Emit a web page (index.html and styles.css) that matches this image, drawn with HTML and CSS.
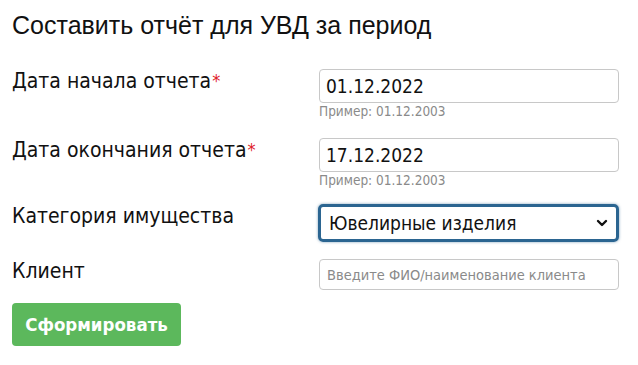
FILE: index.html
```html
<!DOCTYPE html>
<html lang="ru">
<head>
<meta charset="utf-8">
<title>Отчёт для УВД</title>
<link rel="stylesheet" href="styles.css">
</head>
<body>
<div class="page">
  <h1 class="title">Составить отчёт для УВД за период</h1>
  <form class="form">
    <div class="row row-1">
      <label class="label">Дата начала отчета<span class="req">*</span></label>
      <div class="field">
        <input class="input" type="text" value="01.12.2022">
        <div class="hint">Пример: 01.12.2003</div>
      </div>
    </div>
    <div class="row row-2">
      <label class="label">Дата окончания отчета<span class="req">*</span></label>
      <div class="field">
        <input class="input" type="text" value="17.12.2022">
        <div class="hint">Пример: 01.12.2003</div>
      </div>
    </div>
    <div class="row row-3">
      <label class="label">Категория имущества</label>
      <div class="field">
        <div class="select">
          <span class="select-value">Ювелирные изделия</span>
          <svg class="chevron" width="12" height="8" viewBox="0 0 12 8"><path d="M2 2 L6 6 L10 2" fill="none" stroke="#111" stroke-width="2.4" stroke-linecap="round" stroke-linejoin="round"/></svg>
        </div>
      </div>
    </div>
    <div class="row row-4">
      <label class="label">Клиент</label>
      <div class="field">
        <input class="input input-sm" type="text" placeholder="Введите ФИО/наименование клиента">
      </div>
    </div>
    <button class="btn" type="button">Сформировать</button>
  </form>
</div>
</body>
</html>
```
FILE: styles.css
```css
* { box-sizing: border-box; }
html, body { margin: 0; padding: 0; background: #fff; }
.page {
  padding: 10px 20px 0 12px;
  font-family: "DejaVu Sans Condensed", "DejaVu Sans", sans-serif;
  color: #111;
}
.title {
  margin: 0 0 29px 0;
  font-family: "Liberation Sans", Arial, sans-serif;
  font-weight: normal;
  font-size: 25px;
  line-height: 30px;
  color: #111;
}
.row {
  display: grid;
  grid-template-columns: 307px 300px;
  align-items: start;
}
.row-1 { margin-bottom: 19px; }
.row-2 { margin-bottom: 16px; }
.row-3 { margin-bottom: 17px; }
.row-4 { margin-bottom: 13px; }
.label {
  font-size: 21px;
  line-height: 24px;
  padding-top: 0;
}
.req { color: #e0202a; font-size: 18px; vertical-align: top; margin-left: 1px; }
.field { display: flex; flex-direction: column; }
.input {
  height: 34px;
  width: 300px;
  border: 1px solid #c8c8c8;
  border-radius: 4px;
  padding: 0 6px;
  font-family: "DejaVu Sans Condensed", "DejaVu Sans", sans-serif;
  font-size: 19px;
  color: #111;
  outline: none;
}
.input-sm { height: 31px; font-size: 14.5px; padding: 0 7px; }
.input-sm::placeholder { color: #8a8a8a; }
.hint {
  margin-top: 1px;
  font-size: 13.5px;
  line-height: 15px;
  color: #8a8a8a;
}
.select {
  height: 38px;
  width: 301px;
  margin-left: -1px;
  border: 3px solid #2b6591;
  border-radius: 5px;
  box-shadow: 0 0 3px rgba(43,101,145,0.6);
  display: flex;
  align-items: center;
  justify-content: space-between;
  padding: 0 8px 0 8px;
  font-size: 19px;
}
.chevron { display: block; }
.btn {
  display: block;
  height: 43px;
  width: 169px;
  border: none;
  border-radius: 4px;
  background: #5cb85c;
  color: #fff;
  font-family: "DejaVu Sans Condensed", "DejaVu Sans", sans-serif;
  font-weight: bold;
  font-size: 18.5px;
  padding: 0;
}
```
